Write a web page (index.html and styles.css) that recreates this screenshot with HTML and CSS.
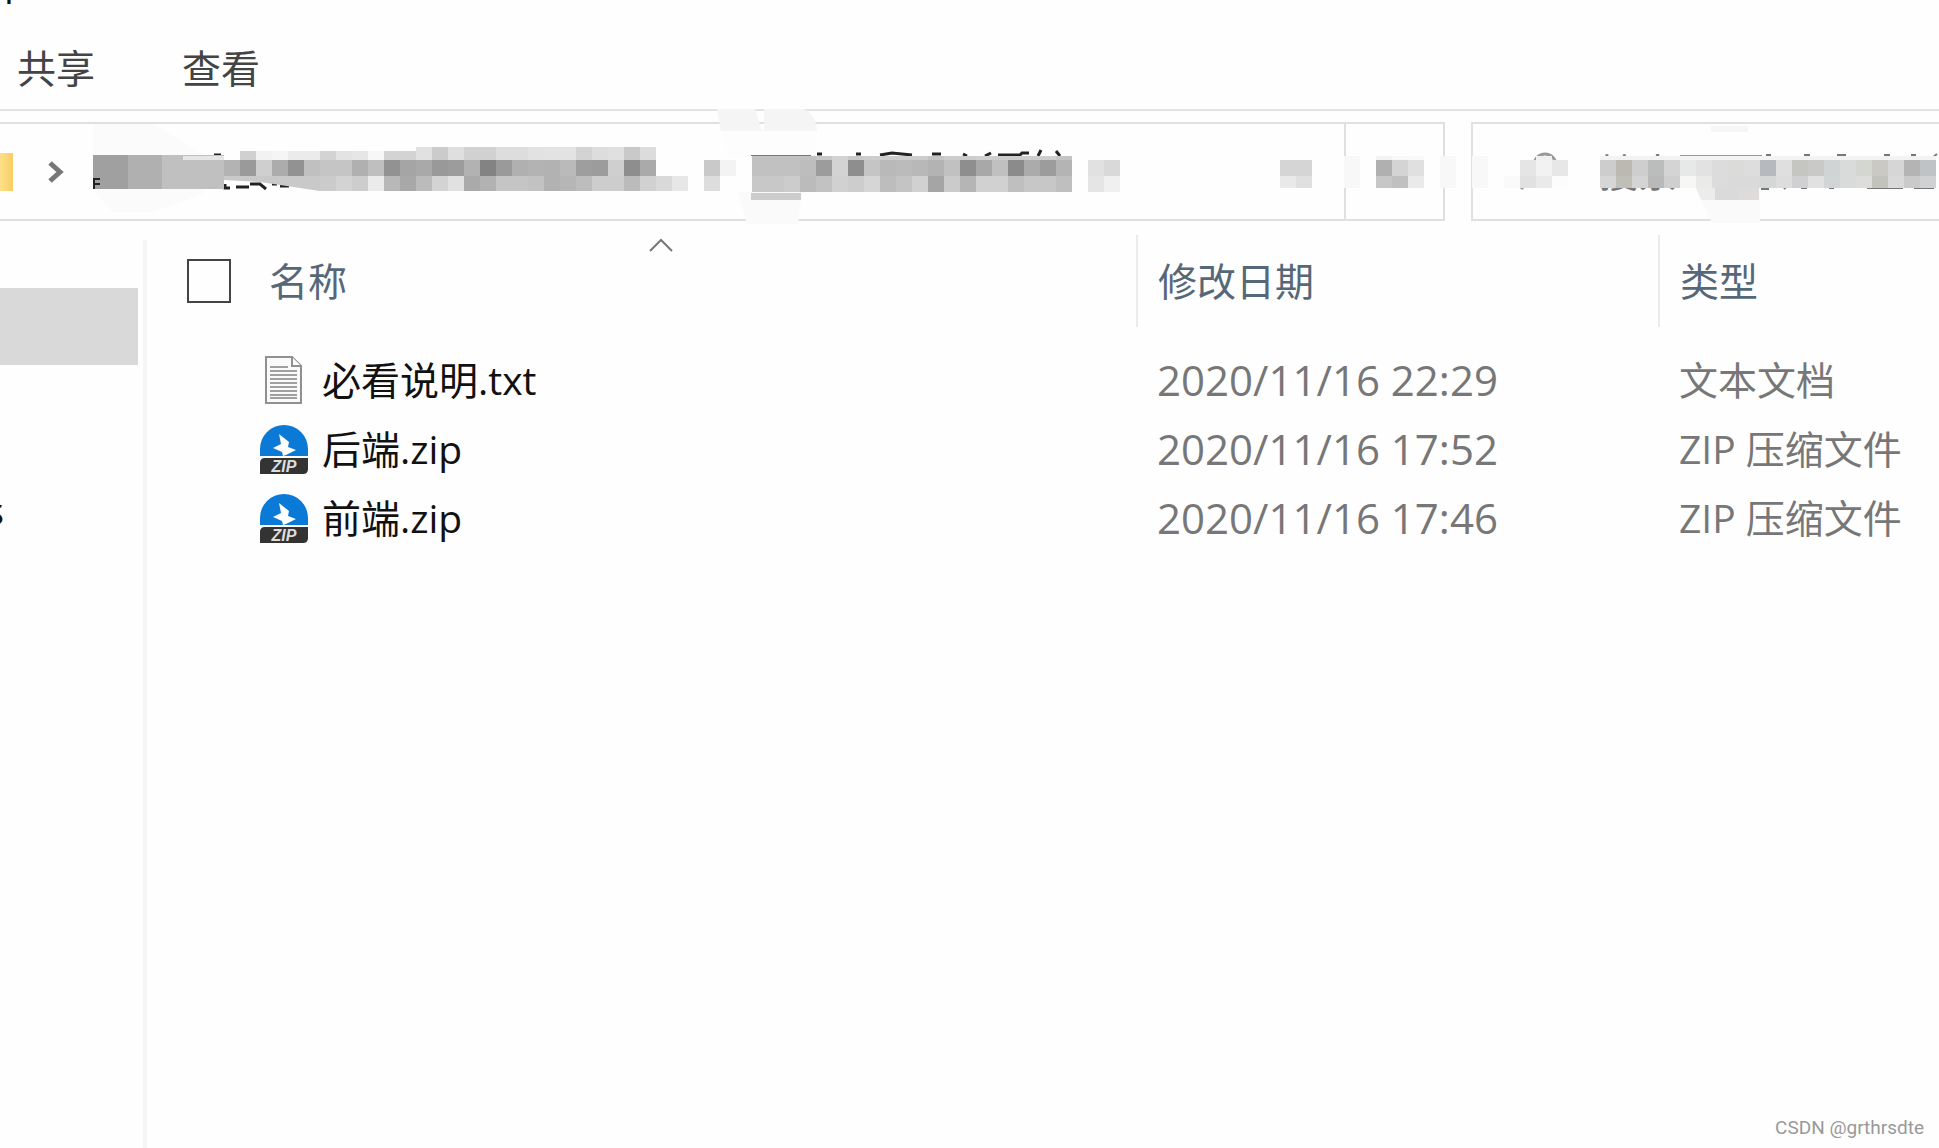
FILE: index.html
```html
<!DOCTYPE html>
<html lang="zh-CN">
<head>
  <meta charset="UTF-8">
  <title>文件资源管理器</title>
  <link rel="stylesheet" href="styles.css">
</head>
<body>
  <div class="title-bar"><span>p</span></div>

  <nav class="ribbon">
    <button class="tab">共享</button>
    <button class="tab">查看</button>
  </nav>

  <div class="nav-bar">
    <div class="address">
      <div class="path">
        <span class="folder"></span>
        <svg class="chevron" width="18" height="24" viewBox="0 0 18 24">
          <path d="M3 3l10 9-10 9" fill="none" stroke="#777" stroke-width="5"/>
        </svg>
      </div>
      <button class="refresh" aria-label="刷新">
        <svg width="32" height="40" viewBox="0 0 32 40">
          <path d="M4 18v6a12 12 0 0 0 24 2" fill="none" stroke="#777" stroke-width="4"/>
        </svg>
      </button>
    </div>
    <div class="search">
      <svg width="44" height="42" viewBox="0 0 44 42">
        <circle cx="28" cy="14" r="11" fill="none" stroke="#999" stroke-width="3"/>
        <path d="M20 22L4 38" stroke="#999" stroke-width="3"/>
      </svg>
      <input type="text" placeholder="搜索" aria-label="搜索">
    </div>
    <svg class="mosaic" id="mosaic" width="1939" height="130" viewBox="0 100 1939 130"></svg>
  </div>

  <div class="main">
    <aside class="sidebar">
      <div class="selected"></div>
      <a class="side-link" href="#">s</a>
    </aside>

    <table class="files">
      <colgroup>
        <col class="col-check">
        <col class="col-name">
        <col class="col-date">
        <col class="col-type">
      </colgroup>
      <thead>
        <tr>
          <th><input type="checkbox" class="check" aria-label="全选"></th>
          <th class="name-head">名称
            <svg class="sort" width="26" height="14" viewBox="0 0 26 14">
              <path d="M2 13L13 2l11 11" fill="none" stroke="#777" stroke-width="2"/>
            </svg>
          </th>
          <th class="split">修改日期</th>
          <th class="split">类型</th>
        </tr>
      </thead>
      <tbody>
        <tr>
          <td></td>
          <td>
            <div class="file">
              <svg width="48" height="50" viewBox="0 0 48 50">
                <path d="M6 1h26l9 9v37H6z" fill="#fafafa" stroke="#909090" stroke-width="2"/>
                <path d="M32 1v9h9" fill="#fff" stroke="#909090" stroke-width="2"/>
                <path d="M10 11h18M10 15h27M10 19h27M10 23h27M10 27h27M10 31h27M10 35h27M10 39h27M10 42h27" stroke="#a0a0a0" stroke-width="2"/>
              </svg>
              <span>必看说明.txt</span>
            </div>
          </td>
          <td class="date">2020/11/16 22:29</td>
          <td>文本文档</td>
        </tr>
        <tr>
          <td></td>
          <td>
            <div class="file">
              <svg width="48" height="50" viewBox="0 0 48 50">
                <path d="M0 31V24a24 24 0 0 1 48 0v7z" fill="#0b79d6"/>
                <path d="M19 9l10 8-1 5 8 3-10 5-3 1-1-4-9-4 8-4z" fill="#fff"/>
                <path d="M5 33h43v11q0 5-5 5H0V38q0-5 5-5z" fill="#333"/>
                <text x="24" y="47" class="zip-label">ZIP</text>
              </svg>
              <span>后端.zip</span>
            </div>
          </td>
          <td class="date">2020/11/16 17:52</td>
          <td>ZIP 压缩文件</td>
        </tr>
        <tr>
          <td></td>
          <td>
            <div class="file">
              <svg width="48" height="50" viewBox="0 0 48 50">
                <path d="M0 31V24a24 24 0 0 1 48 0v7z" fill="#0b79d6"/>
                <path d="M19 9l10 8-1 5 8 3-10 5-3 1-1-4-9-4 8-4z" fill="#fff"/>
                <path d="M5 33h43v11q0 5-5 5H0V38q0-5 5-5z" fill="#333"/>
                <text x="24" y="47" class="zip-label">ZIP</text>
              </svg>
              <span>前端.zip</span>
            </div>
          </td>
          <td class="date">2020/11/16 17:46</td>
          <td>ZIP 压缩文件</td>
        </tr>
      </tbody>
    </table>
  </div>

  <div class="watermark">CSDN @grthrsdte</div>

  <script src="script.js"></script>
</body>
</html>
```

FILE: styles.css
```css
* {
  box-sizing: border-box;
  margin: 0;
  padding: 0;
}

body {
  position: relative;
  display: flex;
  flex-direction: column;
  min-height: 100vh;
  overflow-x: hidden;
  background: #fefefe;
  font-family: "Open Sans", "Noto Sans CJK SC", sans-serif;
  font-size: 39px;
  color: #111;
}

button,
input {
  border: none;
  background: none;
  font: inherit;
  color: inherit;
}

.title-bar {
  display: flex;
  align-items: flex-end;
  height: 12px;
  padding: 0 0 8px 4px;
  line-height: 48px;
  overflow: hidden;
}

.ribbon {
  display: flex;
  gap: 87px;
  height: 99px;
  padding: 0 17px;
  border-bottom: 2px solid #e3e3e3;
  color: #444;
}

.tab {
  line-height: 52px;
  padding-top: 14px;
}

.nav-bar {
  position: relative;
  display: flex;
  gap: 26px;
  height: 99px;
  margin-top: 11px;
}

.address {
  flex: 1;
  display: flex;
  border: 2px solid #e0e0e0;
  border-left: none;
}

.path {
  flex: 1;
  display: flex;
  align-items: center;
  gap: 34px;
}

.folder {
  width: 13px;
  height: 38px;
  background: linear-gradient(to right, #ffe08a, #f6cd63);
}

.refresh {
  width: 99px;
  border-left: 2px solid #e0e0e0;
}

.search {
  display: flex;
  align-items: center;
  gap: 38px;
  width: 468px;
  padding-left: 44px;
  border: 2px solid #e0e0e0;
  border-right: none;
}

.search input {
  width: 340px;
  outline: none;
}

.search input::placeholder {
  color: #777;
}

/* covers the folder path and the search hint */
.mosaic {
  position: absolute;
  left: 0;
  top: -22px;
  pointer-events: none;
}

.main {
  flex: 1;
  display: flex;
}

.sidebar {
  width: 147px;
  margin-top: 19px;
  padding-top: 48px;
  border-right: 4px solid #f6f6f6;
}

.selected {
  width: 138px;
  height: 77px;
  background: #d9d9d9;
}

.side-link {
  display: flex;
  justify-content: flex-end;
  width: 4px;
  margin-top: 118px;
  line-height: 54px;
  overflow: hidden;
  color: #111;
  text-decoration: none;
}

.files {
  flex: 1;
  align-self: flex-start;
  margin-top: 14px;
  border-collapse: collapse;
  table-layout: fixed;
  color: #777;
}

.col-check {
  width: 113px;
}

.col-date {
  width: 522px;
}

.col-type {
  width: 280px;
}

.files th {
  position: relative;
  height: 92px;
  font-weight: normal;
  text-align: left;
  line-height: 52px;
  color: #566878;
}

.files td {
  height: 69px;
  line-height: 52px;
  white-space: nowrap;
}

.files tbody::before {
  content: "";
  display: block;
  height: 19px;
}

.files th:first-child {
  padding-left: 40px;
}

.files th:nth-child(2) {
  padding-left: 9px;
}

.files .split {
  border-left: 2px solid #ebebeb;
}

.files th:nth-child(n+3),
.files td:nth-child(n+3) {
  padding-left: 20px;
}

.files td:nth-child(n+3) {
  padding-bottom: 2px;
}

.files .date {
  font-size: 42px;
}

.check {
  display: block;
  width: 44px;
  height: 44px;
  appearance: none;
  border: 2px solid #444;
}

.sort {
  position: absolute;
  left: 388px;
  top: 3px;
}

.file {
  display: flex;
  align-items: center;
  gap: 14px;
  color: #111;
}

.file span {
  padding-bottom: 2px;
}

.zip-label {
  font: italic bold 16px "Liberation Sans", sans-serif;
  fill: #ddd;
  text-anchor: middle;
}

.watermark {
  position: absolute;
  right: 15px;
  bottom: 8px;
  font-family: Roboto, sans-serif;
  font-size: 19px;
  line-height: 24px;
  color: #999;
}
```

FILE: script.js
```js
const svg = document.getElementById("mosaic");

function draw(tag, attrs) {
  const el = document.createElementNS("http://www.w3.org/2000/svg", tag);
  for (const key in attrs) el.setAttribute(key, attrs[key]);
  svg.appendChild(el);
}

function tile(x, y, width, height, fill) {
  draw("rect", { x, y, width, height, fill, "shape-rendering": "crispEdges" });
}

// row of 16px tiles, two hex digits are a grey, "-" is a gap
function row(x, y, height, colors) {
  colors.split(" ").forEach((c, i) => {
    if (c === "-") return;
    tile(x + i * 16, y, 16, height, "#" + (c.length === 2 ? c + c + c : c));
  });
}

// pale smudges
draw("path", { d: "M93 124h60l50 30v40l-50 18h-40l-20-22z", fill: "#fbfbfb" });
draw("path", { d: "M717 109h38l7 22h-41zM764 109h40q12 5 13 22h-53z", fill: "#f5f5f5" });
draw("path", { d: "M722 131h94l-2 25h-88z", fill: "#fdfdfd" });
draw("path", { d: "M738 192h64l-4 32h-51z", fill: "#fafafa" });
draw("path", { d: "M1696 188h64v35h-48z", fill: "#fafafa" });
tile(1711, 126, 37, 6, "#f6f6f6");

// leftovers of the path text
draw("path", {
  d: "M214 155h7M817 154h5M856 154h5M880 155l12-2 20 2M932 154h9M963 154l4 2M985 156l6-3M998 155h22l2-2h7M1038 156l3-6M1056 151l4 5",
  fill: "none", stroke: "#222", "stroke-width": 3
});
draw("path", {
  d: "M225 184v4h5M236 187h13M250 184h10l6 5M272 184h5M280 186h9",
  fill: "none", stroke: "#222", "stroke-width": 3
});
draw("path", {
  d: "M1766 155h5M1804 155h6M1837 155h9M1884 155h6M1911 155h5M1932 158l5-4M1761 189h8M1784 189l3-3M1801 188h6M1829 188h5M1867 188h36M1914 188h20",
  fill: "none", stroke: "#777", "stroke-width": 2
});
tile(751, 155, 60, 1, "#777777");
tile(1680, 155, 82, 1, "#999999");

tile(93, 155, 35, 34, "#a0a0a0");
tile(128, 155, 34, 34, "#b0b0b0");
tile(162, 155, 62, 34, "#c0c0c0");
tile(183, 156, 41, 4, "#e6e6e6");
draw("path", { d: "M94 189v-10h6M95 184h5", fill: "none", stroke: "#222", "stroke-width": 2 });
draw("path", { d: "M224 176h96v15l-60-9-36-2z", fill: "#c9c9c9" });

row(240, 151, 9, "d0 f2 f5 eb eb d3 e3 e6 f7 d3 d3");
row(416, 147, 13, "e1 cb df d1 d1 dd dd e2 e3 e3 d3 dd e0 c9 dc");
row(224, 160, 16, "b3 9a cf ac 92 c0 c5 c5 b0 bf 92 a5 a9 99 9c b2 83 9a b0 b3 b2 ba 9e 9c cf 8e aa - - - c9 f3");
row(320, 176, 15, "cb d3 cd eb b8 a8 bb d3 e1 aa b2 c5 c5 c2 b2 b6 bd cd cd bb d1 d9 e7 - dd");

row(752, 156, 4, "c1 c1 c1 c1 c8 d3 c9 cd cd cd cd c4 cd cd d0 cd cd cd cd c4");
row(752, 160, 16, "c1 c1 c1 bd 9c d3 8e c5 b9 bb b8 b3 c1 8e a8 c0 8b ab 9c b4 - e1 d9");
row(752, 176, 16, "c8 c8 cc bb c2 d1 cd d6 bd c4 d1 a5 cb b5 d1 d1 bf c7 c7 bf - e5 f0");
tile(751, 193, 50, 7, "#cccccc");

row(1280, 160, 16, "d5 d5");
row(1280, 176, 12, "e9 e0");
row(1344, 156, 32, "f8 - - - - - f8 - f8");
row(1376, 156, 4, "f3 f8 fa - - - - - - - f0");
row(1376, 160, 16, "b0 d4 e0 - - - - - - e5 f2 e7");
row(1376, 176, 12, "c7 c0 ea - - - - - fa e1 ea fc");

row(1600, 156, 4, "f3 f3 f3 f3 f3 f3 f3 f3 f3 f3 f3 f3 f3 f3 f3 f3 f3 f3 f3 f3 f3");
row(1600, 160, 16, "cd bbb9b2 ce bbbdbd d4 e7e9e8 e2 dc dbdbd9 dd b5babe df c6c6c0 c9c9c7 d1d4d4 d8dbd9 d4d6d0 cbc9c4 d6d6d7 b4 bfc3c5");
row(1600, 176, 12, "d6 bfbfb7 d4 b9 cf f7f7f5 eaeae8 dc da da d5d7d7 dd d0d0d2 e1 d2d5d5 d8dbda dddddb c3c3bd d9 ca cfd1d3");
draw("path", { d: "M1696 188h19v12h-14z", fill: "#ececea" });
tile(1715, 188, 22, 12, "#d9dbda");
tile(1737, 188, 22, 12, "#dddcda");
```
